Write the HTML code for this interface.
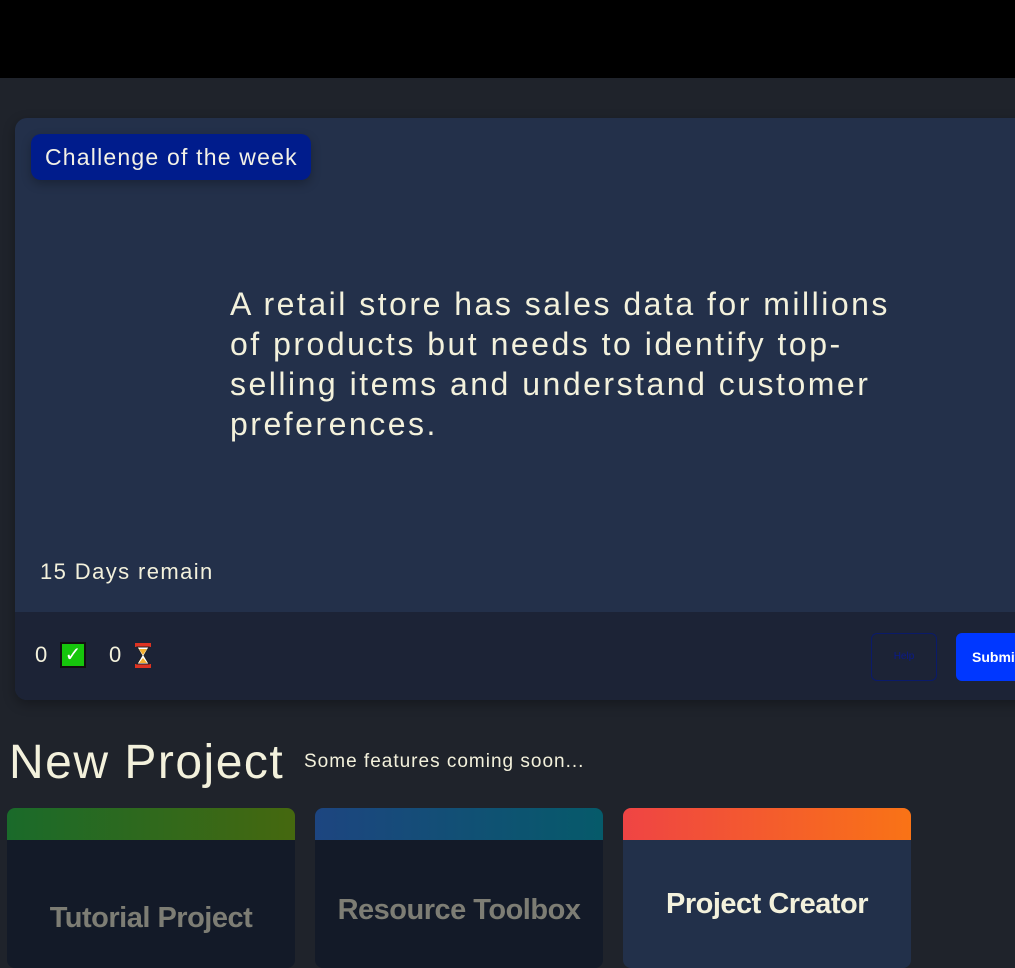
<!DOCTYPE html>
<html><head><style>
*{margin:0;padding:0;box-sizing:border-box}
body{width:1015px;height:942px;overflow:hidden;background:#1f232b;font-family:"Liberation Sans",sans-serif;color:#f3f1dc;position:relative}
.top{position:absolute;left:0;top:0;width:1015px;height:78px;background:#000}
.card{position:absolute;left:15px;top:118px;width:1040px;height:582px;background:#23304a;border-radius:12px;overflow:hidden;box-shadow:0 4px 12px rgba(0,0,0,.3)}
.badge{position:absolute;left:16px;top:16px;height:46px;width:280px;background:#001c8c;border-radius:10px;font-size:23px;letter-spacing:1.2px;line-height:46px;padding-left:14px;color:#f3f1e6;box-shadow:0 4px 10px rgba(0,0,0,.25)}
.q{position:absolute;left:215px;top:166px;white-space:nowrap;font-size:32px;letter-spacing:2.5px;line-height:40px}
.rem{position:absolute;left:25px;top:441px;font-size:22px;letter-spacing:1.4px}
.foot{position:absolute;left:0;top:494px;width:100%;height:88px;background:#1c2336}
.cnt{position:absolute;top:30px;font-size:22px}
.help{position:absolute;left:856px;top:21px;width:66px;height:48px;border:1px solid #0a1a6a;border-radius:6px;color:#0a1a8a;font-size:10px;text-align:center;line-height:46px}
.sub{position:absolute;left:941px;top:21px;width:100px;height:48px;background:#0037ff;border-radius:6px;color:#fff;font-size:14px;font-weight:bold;line-height:48px;padding-left:16px}
h1{position:absolute;left:9px;top:735px;font-size:48px;letter-spacing:1.5px;font-weight:normal}
.soon{position:absolute;left:304px;top:751px;font-size:19px;letter-spacing:1px}
.pc{position:absolute;top:808px;width:288px;height:160px;border-radius:8px;overflow:hidden;background:#131a28}
.pc .h{height:32px}
.pc .t{text-align:center;font-size:29px;font-weight:bold;letter-spacing:-0.5px;color:#7d7d74}
</style></head><body>
<div class="top"></div>
<div class="card">
<div class="badge">Challenge of the week</div>
<div class="q">A retail store has sales data for millions<br>of products but needs to identify top-<br>selling items and understand customer<br>preferences.</div>
<div class="rem">15 Days remain</div>
<div class="foot">
<div class="cnt" style="left:20px">0</div>
<div style="position:absolute;left:45px;top:30px;width:26px;height:26px;background:#16c60c;border:2px solid #111;color:#fff;font-size:20px;text-align:center;line-height:22px">✓</div>
<div class="cnt" style="left:94px">0</div>
<svg style="position:absolute;left:119px;top:30px" width="18" height="27" viewBox="0 0 18 27"><rect x="1" y="1" width="16" height="4" fill="#d32"/><rect x="1" y="22" width="16" height="4" fill="#d32"/><path d="M3 5h12L10 13.5 15 22H3l5-8.5z" fill="#fff" stroke="#222"/><path d="M5 7h8l-4 6zM9 16l4 5H5z" fill="#f4b030"/></svg>
<div class="help">Help</div>
<div class="sub">Submit</div>
</div>
</div>
<h1>New Project</h1>
<div class="soon">Some features coming soon...</div>
<div class="pc" style="left:7px"><div class="h" style="background:linear-gradient(90deg,#1a6a2a,#45680f)"></div><div class="t" style="margin-top:62px">Tutorial Project</div></div>
<div class="pc" style="left:315px"><div class="h" style="background:linear-gradient(90deg,#1d4580,#065a6a)"></div><div class="t" style="margin-top:54px">Resource Toolbox</div></div>
<div class="pc" style="left:623px;background:#22304a"><div class="h" style="background:linear-gradient(90deg,#ef4444,#f97316)"></div><div class="t" style="margin-top:48px;color:#f3f1dc">Project Creator</div></div>
</body></html>
